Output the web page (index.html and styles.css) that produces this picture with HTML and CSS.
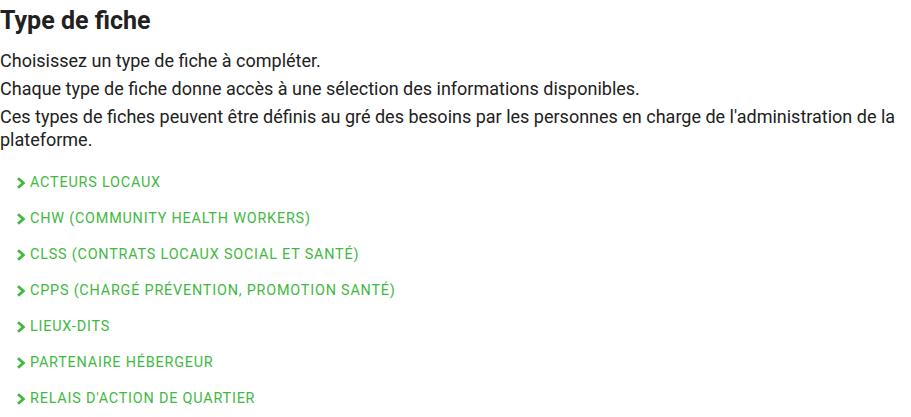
FILE: index.html
```html
<!DOCTYPE html>
<html lang="fr">
<head>
<meta charset="UTF-8">
<meta name="viewport" content="width=device-width, initial-scale=1.0">
<title>Type de fiche</title>
<link rel="stylesheet" href="styles.css">
</head>
<body>

<div class="page">
  <h1 class="page-title">Type de fiche</h1>
  <p class="intro">Choisissez un type de fiche à compléter.</p>
  <p class="intro">Chaque type de fiche donne accès à une sélection des informations disponibles.</p>
  <p class="intro">Ces types de fiches peuvent être définis au gré des besoins par les personnes en charge de l'administration de la plateforme.</p>

  <ul class="type-list">
    <li><a class="type-link" href="#"><svg class="chevron" viewBox="0 0 8 10"><path d="M1.5 1 L6 5 L1.5 9" /></svg>Acteurs locaux</a></li>
    <li><a class="type-link" href="#"><svg class="chevron" viewBox="0 0 8 10"><path d="M1.5 1 L6 5 L1.5 9" /></svg>CHW (Community Health Workers)</a></li>
    <li><a class="type-link" href="#"><svg class="chevron" viewBox="0 0 8 10"><path d="M1.5 1 L6 5 L1.5 9" /></svg>CLSS (Contrats Locaux Social et Santé)</a></li>
    <li><a class="type-link" href="#"><svg class="chevron" viewBox="0 0 8 10"><path d="M1.5 1 L6 5 L1.5 9" /></svg>CPPS (Chargé Prévention, Promotion Santé)</a></li>
    <li><a class="type-link" href="#"><svg class="chevron" viewBox="0 0 8 10"><path d="M1.5 1 L6 5 L1.5 9" /></svg>Lieux-dits</a></li>
    <li><a class="type-link" href="#"><svg class="chevron" viewBox="0 0 8 10"><path d="M1.5 1 L6 5 L1.5 9" /></svg>Partenaire hébergeur</a></li>
    <li><a class="type-link" href="#"><svg class="chevron" viewBox="0 0 8 10"><path d="M1.5 1 L6 5 L1.5 9" /></svg>Relais d'action de quartier</a></li>
  </ul>
</div>

</body>
</html>
```

FILE: styles.css
```css
body {
  margin: 0;
  font-family: Roboto, "Liberation Sans", sans-serif;
  color: #212121;
  background: #fff;
}
.page {
  width: 900px;
}
.page-title {
  font-size: 25px;
  font-weight: 700;
  line-height: 1.1;
  margin: 7px 0 14px;
}
.intro {
  font-size: 18px;
  line-height: 23.4px;
  margin: 0 0 4.6px;
}
.type-list {
  list-style: none;
  margin: 13.6px 0 0;
  padding: 0 0 0 16px;
}
.type-list li {
  height: 36px;
  display: flex;
  align-items: center;
}
.type-link {
  display: flex;
  align-items: center;
  gap: 4px;
  color: #3fb93f;
  text-decoration: none;
  text-transform: uppercase;
  font-size: 14.4px;
  letter-spacing: 0.8px;
}
.chevron {
  width: 10px;
  height: 12px;
  fill: none;
  stroke: #3fb93f;
  stroke-width: 2.3;
}
```
